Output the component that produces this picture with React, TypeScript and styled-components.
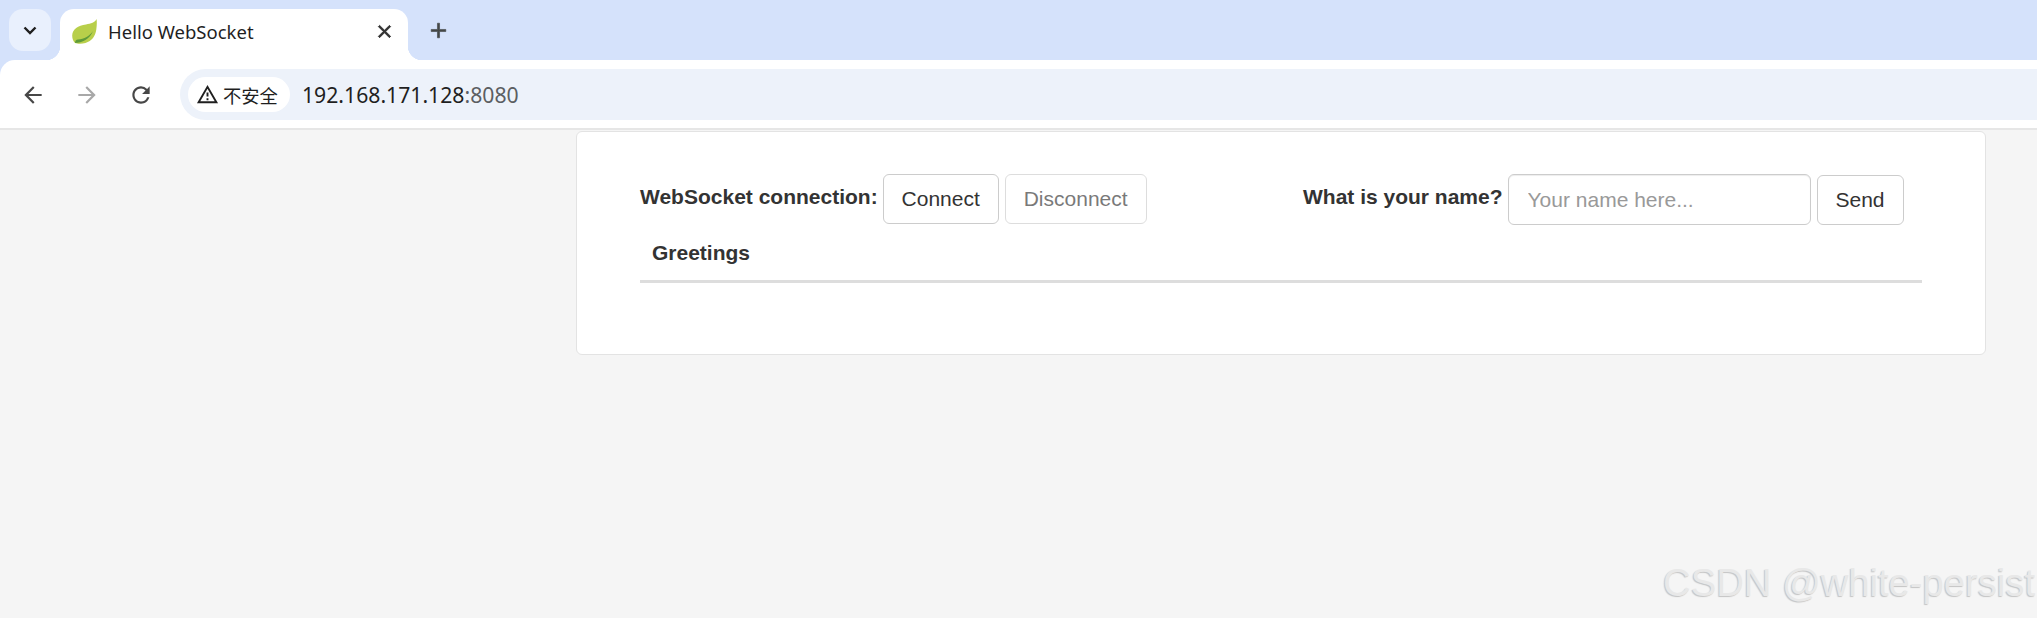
import React from 'react';
import styled, { createGlobalStyle } from 'styled-components';

const GlobalStyle = createGlobalStyle`
  html, body {
    margin: 0;
    height: 100%;
    background-color: #f5f5f5;
    overflow: hidden;
  }
  * {
    box-sizing: border-box;
  }
`;

const Page = styled.div`
  position: relative;
  height: 618px;
  display: flex;
  flex-direction: column;
  font-family: 'Liberation Sans', Arial, sans-serif;
  color: #333;
`;

const TabStrip = styled.div`
  height: 60px;
  flex: none;
  display: flex;
  align-items: flex-end;
  padding-left: 9px;
  background-color: #d5e2fb;
`;

const TabSearch = styled.div`
  width: 42px;
  height: 42px;
  margin-bottom: 9px;
  display: flex;
  align-items: center;
  justify-content: center;
  border-radius: 14px;
  background-color: #e9f0fd;
  color: #1f1f1f;
`;

const Tab = styled.div`
  position: relative;
  width: 348px;
  height: 51px;
  margin-left: 9px;
  padding: 0 13px 7px 12px;
  display: flex;
  align-items: center;
  background-color: #fff;
  border-radius: 14px 14px 0 0;

  &::before,
  &::after {
    content: '';
    position: absolute;
    bottom: 0;
    width: 14px;
    height: 14px;
  }

  &::before {
    left: -14px;
    background: radial-gradient(circle at 0 0, transparent 14px, #fff 14.5px);
  }

  &::after {
    right: -14px;
    background: radial-gradient(circle at 100% 0, transparent 14px, #fff 14.5px);
  }
`;

const Favicon = styled.svg`
  width: 25px;
  height: 25px;
  flex: none;
`;

const TabTitle = styled.span`
  flex: 1;
  margin-left: 11px;
  font-family: 'Noto Sans', sans-serif;
  font-size: 18.5px;
  color: #1f1f1f;
  white-space: nowrap;
`;

const NewTab = styled.div`
  width: 30px;
  height: 30px;
  margin: 0 0 15px 15px;
  display: flex;
  align-items: center;
  justify-content: center;
  color: #444746;
`;

const ToolbarBack = styled.div`
  flex: none;
  background-color: #d5e2fb;
`;

const Toolbar = styled.div`
  height: 70px;
  padding: 9px 0 9px 18px;
  display: flex;
  align-items: flex-start;
  background-color: #fff;
  border-top-left-radius: 15px;
  border-bottom: 2px solid #e6e6e6;
`;

const NavButton = styled.div<{ $dim?: boolean }>`
  width: 30px;
  height: 51px;
  margin-right: 24px;
  display: flex;
  align-items: center;
  justify-content: center;
  color: ${(p) => (p.$dim ? '#a8a8a8' : '#474747')};
`;

const Omnibox = styled.div`
  flex: 1;
  height: 51px;
  padding-left: 8px;
  display: flex;
  align-items: center;
  background-color: #edf2fa;
  border-radius: 26px 0 0 26px;
`;

const SecurityChip = styled.div`
  width: 102px;
  height: 35px;
  padding-left: 8px;
  display: flex;
  align-items: center;
  gap: 4px;
  background-color: #fff;
  border-radius: 18px;
  font-family: 'Noto Sans CJK SC', sans-serif;
  font-size: 18.3px;
  color: #1f1f1f;
`;

const Url = styled.div`
  margin-left: 12px;
  font-family: 'Noto Sans', sans-serif;
  font-size: 21.2px;
  color: #1f1f1f;
`;

const Port = styled.span`
  color: #5b5e62;
`;

const Main = styled.main`
  flex: 1;
  padding-top: 1px;
`;

const Card = styled.section`
  width: 1410px;
  height: 224px;
  margin-left: 576px;
  padding: 42px 63px 0 63px;
  background-color: #fff;
  border: 1px solid #e3e3e3;
  border-radius: 6px;
`;

const FormGrid = styled.div`
  display: grid;
  grid-template-columns: 641px 641px;
`;

const InlineForm = styled.div<{ $right?: boolean }>`
  display: flex;
  align-items: flex-start;
  gap: 6px;
  padding-left: ${(p) => (p.$right ? '22px' : '0')};
`;

const Label = styled.label`
  height: 49px;
  margin-right: -1px;
  line-height: 46px;
  font-size: 21px;
  font-weight: 700;
  white-space: nowrap;
`;

const Button = styled.button<{ $w: number; $top?: number; $h?: number }>`
  width: ${(p) => p.$w}px;
  height: ${(p) => p.$h ?? 50}px;
  margin-top: ${(p) => p.$top ?? 0}px;
  padding: 0;
  font-family: 'Liberation Sans', Arial, sans-serif;
  font-size: 21px;
  color: #333;
  background-color: #fff;
  border: 1.5px solid #ccc;
  border-radius: 6px;

  &:disabled {
    opacity: 0.65;
  }
`;

const NameInput = styled.input`
  width: 303px;
  height: 51px;
  padding: 0 19px;
  font-family: 'Liberation Sans', Arial, sans-serif;
  font-size: 21px;
  color: #555;
  background-color: #fff;
  border: 1.5px solid #ccc;
  border-radius: 6px;
  box-shadow: inset 0 1px 1px rgba(0, 0, 0, 0.075);

  &::placeholder {
    color: #999;
    opacity: 1;
  }
`;

const Table = styled.table`
  width: 100%;
  border-collapse: collapse;
`;

const HeadCell = styled.th`
  height: 56px;
  padding: 0 12px 12px;
  font-size: 21px;
  font-weight: 700;
  text-align: left;
  vertical-align: bottom;
  line-height: 30px;
  border-bottom: 3px solid #ddd;
`;

const Watermark = styled.div`
  position: absolute;
  right: 2px;
  top: 560px;
  font-size: 38.2px;
  line-height: 46px;
  color: #e8e8e8;
  text-shadow: -1px 1px 1px #c4c4c4;
  white-space: nowrap;
`;

const Icon = ({ d, size = 24, bold = 0 }: { d: string; size?: number; bold?: number }) => (
  <svg width={size} height={size} viewBox="0 0 24 24" fill="currentColor" stroke="currentColor" strokeWidth={bold}>
    <path d={d} />
  </svg>
);

const App = () => {
  return (
    <Page>
      <GlobalStyle />
      <TabStrip>
        <TabSearch>
          <svg width="20" height="20" viewBox="0 0 20 20" fill="none" stroke="currentColor" strokeWidth="2.4">
            <path d="M4.5 7.5 10 13l5.5-5.500" />
          </svg>
        </TabSearch>
        <Tab>
          <Favicon viewBox="0 0 25 25">
            <path d="M24.500 0C23 3.500 19 4.500 14 5.500 6 6.500.5 10 .2 16.500c0 3.500 1 5.500 2.800 7.500 2.500 1 7 1 10.500 0 6.500-2 10-7 10.800-13.500.5-4 .8-7.500.2-10.500z" fill="#b8cf4a" />
            <path d="M3 24c7 0 15-4 18-12-3 5-9 8-15 8.500-2 .2-3 1.500-3 3.500z" fill="#5f9b3a" />
          </Favicon>
          <TabTitle>Hello WebSocket</TabTitle>
          <Icon size={21} bold={1.1} d="M19 6.410 17.590 5 12 10.590 6.410 5 5 6.410 10.590 12 5 17.590 6.410 19 12 13.410 17.590 19 19 17.590 13.410 12z" />
        </Tab>
        <NewTab>
          <Icon size={25} bold={0.6} d="M19 13h-6v6h-2v-6H5v-2h6V5h2v6h6v2z" />
        </NewTab>
      </TabStrip>
      <ToolbarBack>
        <Toolbar>
          <NavButton>
            <Icon size={26} d="M20 11H7.830l5.590-5.590L12 4l-8 8 8 8 1.410-1.410L7.830 13H20v-2z" />
          </NavButton>
          <NavButton $dim>
            <Icon size={26} d="M4 11h12.170l-5.590-5.590L12 4l8 8-8 8-1.410-1.410L16.170 13H4v-2z" />
          </NavButton>
          <NavButton>
            <Icon size={26} d="M17.650 6.350A7.958 7.958 0 0 0 12 4c-4.420 0-7.990 3.580-7.990 8s3.570 8 7.990 8c3.730 0 6.840-2.550 7.730-6h-2.080A5.990 5.990 0 0 1 12 18c-3.310 0-6-2.690-6-6s2.690-6 6-6c1.660 0 3.140.690 4.220 1.780L13 11h7V4l-2.350 2.350z" />
          </NavButton>
          <Omnibox>
            <SecurityChip>
              <Icon size={23} d="M12 5.990 19.530 19H4.470L12 5.990M12 2 1 21h22L12 2zm1 14h-2v2h2v-2zm0-6h-2v4h2v-4z" />
              不安全
            </SecurityChip>
            <Url>
              192.168.171.128<Port>:8080</Port>
            </Url>
          </Omnibox>
        </Toolbar>
      </ToolbarBack>
      <Main>
        <Card>
          <FormGrid>
            <InlineForm>
              <Label>WebSocket connection:</Label>
              <Button $w={116}>Connect</Button>
              <Button $w={142} disabled>
                Disconnect
              </Button>
            </InlineForm>
            <InlineForm $right>
              <Label>What is your name?</Label>
              <NameInput placeholder="Your name here..." />
              <Button $w={87} $h={50} $top={1}>
                Send
              </Button>
            </InlineForm>
          </FormGrid>
          <Table>
            <thead>
              <tr>
                <HeadCell>Greetings</HeadCell>
              </tr>
            </thead>
          </Table>
        </Card>
      </Main>
      <Watermark>CSDN @white-persist</Watermark>
    </Page>
  );
};

export default App;
